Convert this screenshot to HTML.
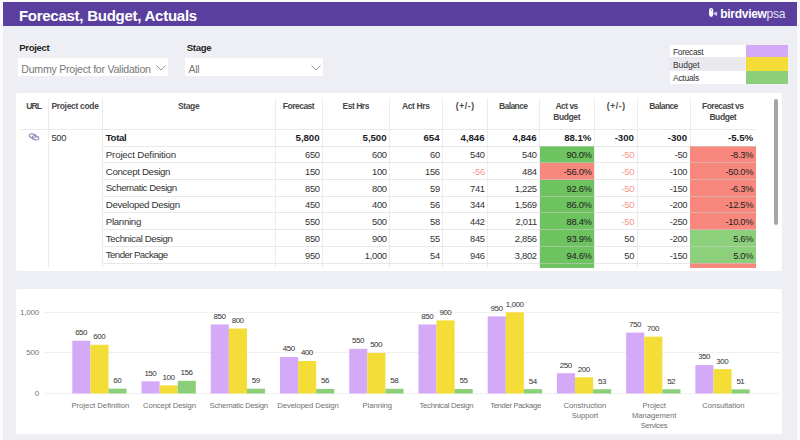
<!DOCTYPE html><html><head><meta charset="utf-8"><style>
*{margin:0;padding:0;box-sizing:border-box}
html,body{width:800px;height:440px;overflow:hidden}
body{background:#FAFAFC;font-family:"Liberation Sans",sans-serif;position:relative}
.a{position:absolute;white-space:nowrap}
.bg{position:absolute;left:3px;top:2px;width:794px;height:438px;background:#EEEFF4}
.hdr{position:absolute;left:3px;top:2px;width:794px;height:23.6px;background:#5A3F9E}
.panel{position:absolute;background:#fff}
.rp{border-radius:2px}
.t{position:absolute;white-space:nowrap;font-size:9.7px;color:#333;line-height:12px;letter-spacing:-0.1px}
.h{position:absolute;white-space:nowrap;font-size:8.5px;font-weight:bold;color:#484848;text-align:center;line-height:11px;letter-spacing:-0.3px}
.vl{position:absolute;width:1px;background:#EDEDED}
.hl{position:absolute;height:1px;background:#EAEAEA}
.bar{position:absolute}
.vlab{position:absolute;white-space:nowrap;font-size:8px;color:#333;text-align:center;width:30px;line-height:9px;letter-spacing:-0.5px}
.clab{position:absolute;white-space:nowrap;font-size:7.7px;color:#707070;text-align:center;width:90px;line-height:10px;letter-spacing:-0.2px}
</style></head><body>
<div class="bg"></div>
<div class="hdr"></div>
<div class="a" style="left:18.9px;top:6.6px;font-size:15px;font-weight:bold;color:#fff;line-height:17px;letter-spacing:-0.26px">Forecast, Budget, Actuals</div>
<div class="a" style="left:720.3px;top:6.7px;font-size:12px;color:#fff;line-height:14px;letter-spacing:-0.3px"><b>birdview</b><span style="font-weight:normal;opacity:.85">psa</span></div>
<svg class="a" style="left:709px;top:8px" width="9" height="10" viewBox="0 0 9 10"><path d="M0.1 2 Q0.1 0.1 2.1 0.1 Q4.2 0.1 4.2 2.2 L4.2 6.6 Q4.2 8.9 2.2 8.9 Q0.1 8.9 0.1 6.8 Z" fill="#fff"/><circle cx="2.3" cy="2.1" r="0.7" fill="#5A3F9E"/><path d="M3.8 5.6 L7.8 3.4 Q8.6 5.7 7.8 7.9 Z" fill="#D2C2F5"/></svg>
<div class="a" style="left:19.3px;top:41.5px;font-size:9.6px;font-weight:bold;color:#252525;line-height:12px;letter-spacing:-0.35px">Project</div>
<div class="panel" style="left:18.2px;top:58px;width:150.3px;height:18px"></div>
<div class="a" style="left:21.3px;top:62.5px;font-size:10.6px;color:#777;line-height:13px;letter-spacing:-0.25px">Dummy Project for Validation</div>
<svg class="a" style="left:156px;top:65px" width="10" height="6" viewBox="0 0 10 6"><path d="M0.5 0.5 L5 5 L9.5 0.5" stroke="#808080" stroke-width="0.85" fill="none"/></svg>
<div class="a" style="left:186.8px;top:41.5px;font-size:9.6px;font-weight:bold;color:#252525;line-height:12px;letter-spacing:-0.35px">Stage</div>
<div class="panel" style="left:185.3px;top:58px;width:138.2px;height:18px"></div>
<div class="a" style="left:188.4px;top:62.5px;font-size:10.6px;color:#777;line-height:13px;letter-spacing:-0.25px">All</div>
<svg class="a" style="left:311px;top:65px" width="10" height="6" viewBox="0 0 10 6"><path d="M0.5 0.5 L5 5 L9.5 0.5" stroke="#808080" stroke-width="0.85" fill="none"/></svg>
<div class="panel" style="left:670.2px;top:45.1px;width:76.1px;height:11.9px"></div>
<div class="a" style="left:670.2px;top:57px;width:76.1px;height:13.6px;background:#EAEAEE"></div>
<div class="panel" style="left:670.2px;top:70.6px;width:76.1px;height:13px"></div>
<div class="a" style="left:746.3px;top:45.1px;width:41.5px;height:11.9px;background:#D4AAF8"></div>
<div class="a" style="left:746.3px;top:57px;width:41.5px;height:13.6px;background:#F4DD36"></div>
<div class="a" style="left:746.3px;top:70.6px;width:41.5px;height:13px;background:#8BCF7A"></div>
<div class="a" style="left:673px;top:45.5px;font-size:8.5px;color:#333;line-height:12px;letter-spacing:-0.357px">Forecast</div>
<div class="a" style="left:673px;top:58.5px;font-size:8.5px;color:#333;line-height:12px;letter-spacing:-0.060px">Budget</div>
<div class="a" style="left:673px;top:71.5px;font-size:8.5px;color:#333;line-height:12px;letter-spacing:-0.283px">Actuals</div>
<div class="panel rp" style="left:16px;top:93.2px;width:766px;height:177.6px"></div>
<div class="vl" style="left:47.7px;top:98px;height:169.5px"></div>
<div class="vl" style="left:102.1px;top:98px;height:169.5px"></div>
<div class="vl" style="left:274.5px;top:98px;height:169.5px"></div>
<div class="vl" style="left:322.0px;top:98px;height:169.5px"></div>
<div class="vl" style="left:389.0px;top:98px;height:169.5px"></div>
<div class="vl" style="left:442.0px;top:98px;height:169.5px"></div>
<div class="vl" style="left:487.0px;top:98px;height:169.5px"></div>
<div class="vl" style="left:539.0px;top:98px;height:169.5px"></div>
<div class="vl" style="left:593.8px;top:98px;height:169.5px"></div>
<div class="vl" style="left:637.2px;top:98px;height:169.5px"></div>
<div class="vl" style="left:689.5px;top:98px;height:169.5px"></div>
<div class="hl" style="left:20px;top:128.8px;width:736px"></div>
<div class="h" style="left:19.55px;top:100.7px;width:28.200000000000003px;letter-spacing:-0.900px">URL</div>
<div class="h" style="left:51.4px;top:100.7px;text-align:left;letter-spacing:-0.318px">Project code</div>
<div class="h" style="left:102.42px;top:100.7px;width:172.4px;letter-spacing:-0.362px">Stage</div>
<div class="h" style="left:274.74px;top:100.7px;width:47.5px;letter-spacing:-0.521px">Forecast</div>
<div class="h" style="left:322.26px;top:100.7px;width:67.0px;letter-spacing:-0.483px">Est Hrs</div>
<div class="h" style="left:389.32px;top:100.7px;width:53.0px;letter-spacing:-0.367px">Act Hrs</div>
<div class="h" style="left:442.82px;top:100.7px;width:45.0px;letter-spacing:0.650px">(+/-)</div>
<div class="h" style="left:487.20px;top:100.7px;width:52.0px;letter-spacing:-0.600px">Balance</div>
<div class="h" style="left:539.24px;top:100.7px;width:54.799999999999955px;letter-spacing:-0.520px">Act vs</div>
<div class="h" style="left:539.29px;top:111.7px;width:54.799999999999955px;letter-spacing:-0.420px">Budget</div>
<div class="h" style="left:594.62px;top:100.7px;width:43.40000000000009px;letter-spacing:0.650px">(+/-)</div>
<div class="h" style="left:637.40px;top:100.7px;width:52.299999999999955px;letter-spacing:-0.600px">Balance</div>
<div class="h" style="left:689.73px;top:100.7px;width:66px;letter-spacing:-0.540px">Forecast vs</div>
<div class="h" style="left:689.79px;top:111.7px;width:66px;letter-spacing:-0.420px">Budget</div>
<div class="a" style="left:773.8px;top:98.5px;width:4px;height:126px;border-radius:2px;background:#A6A6A6"></div>
<div class="t" style="left:51.4px;top:132.39999999999998px;font-size:9.4px;letter-spacing:-0.3px">500</div>
<svg class="a" style="left:28px;top:132px" width="12" height="10" viewBox="0 0 12 10"><ellipse cx="4.6" cy="3.9" rx="3.5" ry="2.0" transform="rotate(14 4.6 3.9)" stroke="#8084B4" stroke-width="1" fill="none"/><ellipse cx="7.4" cy="5.9" rx="3.5" ry="2.0" transform="rotate(14 7.4 5.9)" stroke="#8084B4" stroke-width="1" fill="none"/></svg>
<div class="t" style="left:105.8px;top:132.2px;font-weight:bold;color:#1C1C28;letter-spacing:-0.375px">Total</div>
<div class="t" style="left:275px;top:132.39999999999998px;width:44.55px;text-align:right;font-weight:bold;color:#1C1C28;letter-spacing:-0.05px;font-size:9.7px">5,800</div>
<div class="t" style="left:322.5px;top:132.39999999999998px;width:64.05px;text-align:right;font-weight:bold;color:#1C1C28;letter-spacing:-0.05px;font-size:9.7px">5,500</div>
<div class="t" style="left:389.5px;top:132.39999999999998px;width:50.05px;text-align:right;font-weight:bold;color:#1C1C28;letter-spacing:-0.05px;font-size:9.7px">654</div>
<div class="t" style="left:442.5px;top:132.39999999999998px;width:42.05px;text-align:right;font-weight:bold;color:#1C1C28;letter-spacing:-0.05px;font-size:9.7px">4,846</div>
<div class="t" style="left:487.5px;top:132.39999999999998px;width:49.05px;text-align:right;font-weight:bold;color:#1C1C28;letter-spacing:-0.05px;font-size:9.7px">4,846</div>
<div class="t" style="left:539.5px;top:132.39999999999998px;width:51.84999999999995px;text-align:right;font-weight:bold;color:#1C1C28;letter-spacing:-0.05px;font-size:9.7px">88.1%</div>
<div class="t" style="left:594.3px;top:132.39999999999998px;width:39.55000000000009px;text-align:right;font-weight:bold;color:#1C1C28;letter-spacing:-0.05px;font-size:9.7px">-300</div>
<div class="t" style="left:637.7px;top:132.39999999999998px;width:49.34999999999995px;text-align:right;font-weight:bold;color:#1C1C28;letter-spacing:-0.05px;font-size:9.7px">-300</div>
<div class="t" style="left:690px;top:132.39999999999998px;width:63.05px;text-align:right;font-weight:bold;color:#1C1C28;letter-spacing:-0.05px;font-size:9.7px">-5.5%</div>
<div class="t" style="left:105.8px;top:149.0px;font-weight:normal;color:#333;letter-spacing:-0.165px">Project Definition</div>
<div class="t" style="left:275px;top:149.2px;width:44.8px;text-align:right;font-weight:normal;color:#333;letter-spacing:-0.3px;font-size:9.4px">650</div>
<div class="t" style="left:322.5px;top:149.2px;width:64.3px;text-align:right;font-weight:normal;color:#333;letter-spacing:-0.3px;font-size:9.4px">600</div>
<div class="t" style="left:389.5px;top:149.2px;width:50.3px;text-align:right;font-weight:normal;color:#333;letter-spacing:-0.3px;font-size:9.4px">60</div>
<div class="t" style="left:442.5px;top:149.2px;width:42.3px;text-align:right;font-weight:normal;color:#333;letter-spacing:-0.3px;font-size:9.4px">540</div>
<div class="t" style="left:487.5px;top:149.2px;width:49.3px;text-align:right;font-weight:normal;color:#333;letter-spacing:-0.3px;font-size:9.4px">540</div>
<div class="a" style="left:539.5px;top:146.1px;width:54.799999999999955px;height:16.72px;background:#6DC35F"></div>
<div class="t" style="left:539.5px;top:149.2px;width:52.09999999999995px;text-align:right;font-weight:normal;color:#222;letter-spacing:-0.3px;font-size:9.4px">90.0%</div>
<div class="t" style="left:594.3px;top:149.2px;width:39.80000000000009px;text-align:right;font-weight:normal;color:#F09A8E;letter-spacing:-0.3px;font-size:9.4px">-50</div>
<div class="t" style="left:637.7px;top:149.2px;width:49.59999999999995px;text-align:right;font-weight:normal;color:#333;letter-spacing:-0.3px;font-size:9.4px">-50</div>
<div class="a" style="left:690px;top:146.1px;width:66px;height:16.72px;background:#F8887D"></div>
<div class="t" style="left:690px;top:149.2px;width:63.3px;text-align:right;font-weight:normal;color:#222;letter-spacing:-0.3px;font-size:9.4px">-8.3%</div>
<div class="t" style="left:105.8px;top:165.72px;font-weight:normal;color:#333;letter-spacing:-0.331px">Concept Design</div>
<div class="t" style="left:275px;top:165.92px;width:44.8px;text-align:right;font-weight:normal;color:#333;letter-spacing:-0.3px;font-size:9.4px">150</div>
<div class="t" style="left:322.5px;top:165.92px;width:64.3px;text-align:right;font-weight:normal;color:#333;letter-spacing:-0.3px;font-size:9.4px">100</div>
<div class="t" style="left:389.5px;top:165.92px;width:50.3px;text-align:right;font-weight:normal;color:#333;letter-spacing:-0.3px;font-size:9.4px">156</div>
<div class="t" style="left:442.5px;top:165.92px;width:42.3px;text-align:right;font-weight:normal;color:#F09A8E;letter-spacing:-0.3px;font-size:9.4px">-56</div>
<div class="t" style="left:487.5px;top:165.92px;width:49.3px;text-align:right;font-weight:normal;color:#333;letter-spacing:-0.3px;font-size:9.4px">484</div>
<div class="a" style="left:539.5px;top:162.82px;width:54.799999999999955px;height:16.72px;background:#F8887D"></div>
<div class="t" style="left:539.5px;top:165.92px;width:52.09999999999995px;text-align:right;font-weight:normal;color:#222;letter-spacing:-0.3px;font-size:9.4px">-56.0%</div>
<div class="t" style="left:594.3px;top:165.92px;width:39.80000000000009px;text-align:right;font-weight:normal;color:#F09A8E;letter-spacing:-0.3px;font-size:9.4px">-50</div>
<div class="t" style="left:637.7px;top:165.92px;width:49.59999999999995px;text-align:right;font-weight:normal;color:#333;letter-spacing:-0.3px;font-size:9.4px">-100</div>
<div class="a" style="left:690px;top:162.82px;width:66px;height:16.72px;background:#F8887D"></div>
<div class="t" style="left:690px;top:165.92px;width:63.3px;text-align:right;font-weight:normal;color:#222;letter-spacing:-0.3px;font-size:9.4px">-50.0%</div>
<div class="t" style="left:105.8px;top:182.44px;font-weight:normal;color:#333;letter-spacing:-0.447px">Schematic Design</div>
<div class="t" style="left:275px;top:182.64px;width:44.8px;text-align:right;font-weight:normal;color:#333;letter-spacing:-0.3px;font-size:9.4px">850</div>
<div class="t" style="left:322.5px;top:182.64px;width:64.3px;text-align:right;font-weight:normal;color:#333;letter-spacing:-0.3px;font-size:9.4px">800</div>
<div class="t" style="left:389.5px;top:182.64px;width:50.3px;text-align:right;font-weight:normal;color:#333;letter-spacing:-0.3px;font-size:9.4px">59</div>
<div class="t" style="left:442.5px;top:182.64px;width:42.3px;text-align:right;font-weight:normal;color:#333;letter-spacing:-0.3px;font-size:9.4px">741</div>
<div class="t" style="left:487.5px;top:182.64px;width:49.3px;text-align:right;font-weight:normal;color:#333;letter-spacing:-0.3px;font-size:9.4px">1,225</div>
<div class="a" style="left:539.5px;top:179.54px;width:54.799999999999955px;height:16.72px;background:#6DC35F"></div>
<div class="t" style="left:539.5px;top:182.64px;width:52.09999999999995px;text-align:right;font-weight:normal;color:#222;letter-spacing:-0.3px;font-size:9.4px">92.6%</div>
<div class="t" style="left:594.3px;top:182.64px;width:39.80000000000009px;text-align:right;font-weight:normal;color:#F09A8E;letter-spacing:-0.3px;font-size:9.4px">-50</div>
<div class="t" style="left:637.7px;top:182.64px;width:49.59999999999995px;text-align:right;font-weight:normal;color:#333;letter-spacing:-0.3px;font-size:9.4px">-150</div>
<div class="a" style="left:690px;top:179.54px;width:66px;height:16.72px;background:#F8887D"></div>
<div class="t" style="left:690px;top:182.64px;width:63.3px;text-align:right;font-weight:normal;color:#222;letter-spacing:-0.3px;font-size:9.4px">-6.3%</div>
<div class="t" style="left:105.8px;top:199.16px;font-weight:normal;color:#333;letter-spacing:-0.327px">Developed Design</div>
<div class="t" style="left:275px;top:199.35999999999999px;width:44.8px;text-align:right;font-weight:normal;color:#333;letter-spacing:-0.3px;font-size:9.4px">450</div>
<div class="t" style="left:322.5px;top:199.35999999999999px;width:64.3px;text-align:right;font-weight:normal;color:#333;letter-spacing:-0.3px;font-size:9.4px">400</div>
<div class="t" style="left:389.5px;top:199.35999999999999px;width:50.3px;text-align:right;font-weight:normal;color:#333;letter-spacing:-0.3px;font-size:9.4px">56</div>
<div class="t" style="left:442.5px;top:199.35999999999999px;width:42.3px;text-align:right;font-weight:normal;color:#333;letter-spacing:-0.3px;font-size:9.4px">344</div>
<div class="t" style="left:487.5px;top:199.35999999999999px;width:49.3px;text-align:right;font-weight:normal;color:#333;letter-spacing:-0.3px;font-size:9.4px">1,569</div>
<div class="a" style="left:539.5px;top:196.26px;width:54.799999999999955px;height:16.72px;background:#6DC35F"></div>
<div class="t" style="left:539.5px;top:199.35999999999999px;width:52.09999999999995px;text-align:right;font-weight:normal;color:#222;letter-spacing:-0.3px;font-size:9.4px">86.0%</div>
<div class="t" style="left:594.3px;top:199.35999999999999px;width:39.80000000000009px;text-align:right;font-weight:normal;color:#F09A8E;letter-spacing:-0.3px;font-size:9.4px">-50</div>
<div class="t" style="left:637.7px;top:199.35999999999999px;width:49.59999999999995px;text-align:right;font-weight:normal;color:#333;letter-spacing:-0.3px;font-size:9.4px">-200</div>
<div class="a" style="left:690px;top:196.26px;width:66px;height:16.72px;background:#F8887D"></div>
<div class="t" style="left:690px;top:199.35999999999999px;width:63.3px;text-align:right;font-weight:normal;color:#222;letter-spacing:-0.3px;font-size:9.4px">-12.5%</div>
<div class="t" style="left:105.8px;top:215.88px;font-weight:normal;color:#333;letter-spacing:-0.314px">Planning</div>
<div class="t" style="left:275px;top:216.07999999999998px;width:44.8px;text-align:right;font-weight:normal;color:#333;letter-spacing:-0.3px;font-size:9.4px">550</div>
<div class="t" style="left:322.5px;top:216.07999999999998px;width:64.3px;text-align:right;font-weight:normal;color:#333;letter-spacing:-0.3px;font-size:9.4px">500</div>
<div class="t" style="left:389.5px;top:216.07999999999998px;width:50.3px;text-align:right;font-weight:normal;color:#333;letter-spacing:-0.3px;font-size:9.4px">58</div>
<div class="t" style="left:442.5px;top:216.07999999999998px;width:42.3px;text-align:right;font-weight:normal;color:#333;letter-spacing:-0.3px;font-size:9.4px">442</div>
<div class="t" style="left:487.5px;top:216.07999999999998px;width:49.3px;text-align:right;font-weight:normal;color:#333;letter-spacing:-0.3px;font-size:9.4px">2,011</div>
<div class="a" style="left:539.5px;top:212.98px;width:54.799999999999955px;height:16.72px;background:#6DC35F"></div>
<div class="t" style="left:539.5px;top:216.07999999999998px;width:52.09999999999995px;text-align:right;font-weight:normal;color:#222;letter-spacing:-0.3px;font-size:9.4px">88.4%</div>
<div class="t" style="left:594.3px;top:216.07999999999998px;width:39.80000000000009px;text-align:right;font-weight:normal;color:#F09A8E;letter-spacing:-0.3px;font-size:9.4px">-50</div>
<div class="t" style="left:637.7px;top:216.07999999999998px;width:49.59999999999995px;text-align:right;font-weight:normal;color:#333;letter-spacing:-0.3px;font-size:9.4px">-250</div>
<div class="a" style="left:690px;top:212.98px;width:66px;height:16.72px;background:#F8887D"></div>
<div class="t" style="left:690px;top:216.07999999999998px;width:63.3px;text-align:right;font-weight:normal;color:#222;letter-spacing:-0.3px;font-size:9.4px">-10.0%</div>
<div class="t" style="left:105.8px;top:232.6px;font-weight:normal;color:#333;letter-spacing:-0.413px">Technical Design</div>
<div class="t" style="left:275px;top:232.79999999999998px;width:44.8px;text-align:right;font-weight:normal;color:#333;letter-spacing:-0.3px;font-size:9.4px">850</div>
<div class="t" style="left:322.5px;top:232.79999999999998px;width:64.3px;text-align:right;font-weight:normal;color:#333;letter-spacing:-0.3px;font-size:9.4px">900</div>
<div class="t" style="left:389.5px;top:232.79999999999998px;width:50.3px;text-align:right;font-weight:normal;color:#333;letter-spacing:-0.3px;font-size:9.4px">55</div>
<div class="t" style="left:442.5px;top:232.79999999999998px;width:42.3px;text-align:right;font-weight:normal;color:#333;letter-spacing:-0.3px;font-size:9.4px">845</div>
<div class="t" style="left:487.5px;top:232.79999999999998px;width:49.3px;text-align:right;font-weight:normal;color:#333;letter-spacing:-0.3px;font-size:9.4px">2,856</div>
<div class="a" style="left:539.5px;top:229.7px;width:54.799999999999955px;height:16.72px;background:#6DC35F"></div>
<div class="t" style="left:539.5px;top:232.79999999999998px;width:52.09999999999995px;text-align:right;font-weight:normal;color:#222;letter-spacing:-0.3px;font-size:9.4px">93.9%</div>
<div class="t" style="left:594.3px;top:232.79999999999998px;width:39.80000000000009px;text-align:right;font-weight:normal;color:#333;letter-spacing:-0.3px;font-size:9.4px">50</div>
<div class="t" style="left:637.7px;top:232.79999999999998px;width:49.59999999999995px;text-align:right;font-weight:normal;color:#333;letter-spacing:-0.3px;font-size:9.4px">-200</div>
<div class="a" style="left:690px;top:229.7px;width:66px;height:16.72px;background:#8CD07C"></div>
<div class="t" style="left:690px;top:232.79999999999998px;width:63.3px;text-align:right;font-weight:normal;color:#222;letter-spacing:-0.3px;font-size:9.4px">5.6%</div>
<div class="t" style="left:105.8px;top:249.32px;font-weight:normal;color:#333;letter-spacing:-0.592px">Tender Package</div>
<div class="t" style="left:275px;top:249.51999999999998px;width:44.8px;text-align:right;font-weight:normal;color:#333;letter-spacing:-0.3px;font-size:9.4px">950</div>
<div class="t" style="left:322.5px;top:249.51999999999998px;width:64.3px;text-align:right;font-weight:normal;color:#333;letter-spacing:-0.3px;font-size:9.4px">1,000</div>
<div class="t" style="left:389.5px;top:249.51999999999998px;width:50.3px;text-align:right;font-weight:normal;color:#333;letter-spacing:-0.3px;font-size:9.4px">54</div>
<div class="t" style="left:442.5px;top:249.51999999999998px;width:42.3px;text-align:right;font-weight:normal;color:#333;letter-spacing:-0.3px;font-size:9.4px">946</div>
<div class="t" style="left:487.5px;top:249.51999999999998px;width:49.3px;text-align:right;font-weight:normal;color:#333;letter-spacing:-0.3px;font-size:9.4px">3,802</div>
<div class="a" style="left:539.5px;top:246.42px;width:54.799999999999955px;height:16.72px;background:#6DC35F"></div>
<div class="t" style="left:539.5px;top:249.51999999999998px;width:52.09999999999995px;text-align:right;font-weight:normal;color:#222;letter-spacing:-0.3px;font-size:9.4px">94.6%</div>
<div class="t" style="left:594.3px;top:249.51999999999998px;width:39.80000000000009px;text-align:right;font-weight:normal;color:#333;letter-spacing:-0.3px;font-size:9.4px">50</div>
<div class="t" style="left:637.7px;top:249.51999999999998px;width:49.59999999999995px;text-align:right;font-weight:normal;color:#333;letter-spacing:-0.3px;font-size:9.4px">-150</div>
<div class="a" style="left:690px;top:246.42px;width:66px;height:16.72px;background:#8CD07C"></div>
<div class="t" style="left:690px;top:249.51999999999998px;width:63.3px;text-align:right;font-weight:normal;color:#222;letter-spacing:-0.3px;font-size:9.4px">5.0%</div>
<div class="a" style="left:539.5px;top:263.14px;width:54.799999999999955px;height:4.5px;background:#6DC35F"></div>
<div class="a" style="left:690px;top:263.14px;width:66px;height:4.5px;background:#F8887D"></div>
<div class="hl" style="left:102.6px;top:145.6px;width:653.4px;background:rgba(210,210,210,0.5)"></div>
<div class="hl" style="left:102.6px;top:162.32px;width:653.4px;background:rgba(210,210,210,0.5)"></div>
<div class="hl" style="left:102.6px;top:179.04px;width:653.4px;background:rgba(210,210,210,0.5)"></div>
<div class="hl" style="left:102.6px;top:195.76px;width:653.4px;background:rgba(210,210,210,0.5)"></div>
<div class="hl" style="left:102.6px;top:212.48px;width:653.4px;background:rgba(210,210,210,0.5)"></div>
<div class="hl" style="left:102.6px;top:229.2px;width:653.4px;background:rgba(210,210,210,0.5)"></div>
<div class="hl" style="left:102.6px;top:245.92px;width:653.4px;background:rgba(210,210,210,0.5)"></div>
<div class="hl" style="left:102.6px;top:262.64px;width:653.4px;background:rgba(210,210,210,0.5)"></div>
<div class="panel rp" style="left:16px;top:289.2px;width:766.3px;height:144.9px"></div>
<div class="hl" style="left:43.7px;top:311.8px;width:736.3px;background:#F0F0F0"></div>
<div class="a" style="left:0px;top:307.5px;width:39px;text-align:right;font-size:8px;color:#777;line-height:10px;letter-spacing:-0.2px">1,000</div>
<div class="hl" style="left:43.7px;top:352.4px;width:736.3px;background:#F0F0F0"></div>
<div class="a" style="left:0px;top:348.09999999999997px;width:39px;text-align:right;font-size:8px;color:#777;line-height:10px;letter-spacing:-0.2px">500</div>
<div class="hl" style="left:43.7px;top:393.0px;width:736.3px;background:#F0F0F0"></div>
<div class="a" style="left:0px;top:388.7px;width:39px;text-align:right;font-size:8px;color:#777;line-height:10px;letter-spacing:-0.2px">0</div>
<svg class="a" style="left:0;top:0" width="800" height="440" viewBox="0 0 800 440"><rect x="72.30" y="340.72" width="18.1" height="52.78" fill="#D4AAF8"/><rect x="90.40" y="344.78" width="18.1" height="48.72" fill="#F4DD36"/><rect x="108.50" y="388.63" width="18.1" height="4.87" fill="#8BCF7A"/><rect x="141.53" y="381.32" width="18.1" height="12.18" fill="#D4AAF8"/><rect x="159.63" y="385.38" width="18.1" height="8.12" fill="#F4DD36"/><rect x="177.73" y="380.83" width="18.1" height="12.67" fill="#8BCF7A"/><rect x="210.76" y="324.48" width="18.1" height="69.02" fill="#D4AAF8"/><rect x="228.86" y="328.54" width="18.1" height="64.96" fill="#F4DD36"/><rect x="246.96" y="388.71" width="18.1" height="4.79" fill="#8BCF7A"/><rect x="279.99" y="356.96" width="18.1" height="36.54" fill="#D4AAF8"/><rect x="298.09" y="361.02" width="18.1" height="32.48" fill="#F4DD36"/><rect x="316.19" y="388.95" width="18.1" height="4.55" fill="#8BCF7A"/><rect x="349.22" y="348.84" width="18.1" height="44.66" fill="#D4AAF8"/><rect x="367.32" y="352.90" width="18.1" height="40.60" fill="#F4DD36"/><rect x="385.42" y="388.79" width="18.1" height="4.71" fill="#8BCF7A"/><rect x="418.45" y="324.48" width="18.1" height="69.02" fill="#D4AAF8"/><rect x="436.55" y="320.42" width="18.1" height="73.08" fill="#F4DD36"/><rect x="454.65" y="389.03" width="18.1" height="4.47" fill="#8BCF7A"/><rect x="487.68" y="316.36" width="18.1" height="77.14" fill="#D4AAF8"/><rect x="505.78" y="312.30" width="18.1" height="81.20" fill="#F4DD36"/><rect x="523.88" y="389.12" width="18.1" height="4.38" fill="#8BCF7A"/><rect x="556.91" y="373.20" width="18.1" height="20.30" fill="#D4AAF8"/><rect x="575.01" y="377.26" width="18.1" height="16.24" fill="#F4DD36"/><rect x="593.11" y="389.20" width="18.1" height="4.30" fill="#8BCF7A"/><rect x="626.14" y="332.60" width="18.1" height="60.90" fill="#D4AAF8"/><rect x="644.24" y="336.66" width="18.1" height="56.84" fill="#F4DD36"/><rect x="662.34" y="389.28" width="18.1" height="4.22" fill="#8BCF7A"/><rect x="695.37" y="365.08" width="18.1" height="28.42" fill="#D4AAF8"/><rect x="713.47" y="369.14" width="18.1" height="24.36" fill="#F4DD36"/><rect x="731.57" y="389.36" width="18.1" height="4.14" fill="#8BCF7A"/></svg>
<div class="vlab" style="left:66.10px;top:328.12px">650</div>
<div class="vlab" style="left:84.20px;top:332.18px">600</div>
<div class="vlab" style="left:102.30px;top:376.03px">60</div>
<div class="clab" style="left:55.34px;top:401px;letter-spacing:-0.018px">Project Definition</div>
<div class="vlab" style="left:135.33px;top:368.72px">150</div>
<div class="vlab" style="left:153.43px;top:372.78px">100</div>
<div class="vlab" style="left:171.53px;top:368.23px">156</div>
<div class="clab" style="left:124.51px;top:401px;letter-spacing:-0.138px">Concept Design</div>
<div class="vlab" style="left:204.56px;top:311.88px">850</div>
<div class="vlab" style="left:222.66px;top:315.94px">800</div>
<div class="vlab" style="left:240.76px;top:376.11px">59</div>
<div class="clab" style="left:193.69px;top:401px;letter-spacing:-0.233px">Schematic Design</div>
<div class="vlab" style="left:273.79px;top:344.36px">450</div>
<div class="vlab" style="left:291.89px;top:348.42px">400</div>
<div class="vlab" style="left:309.99px;top:376.35px">56</div>
<div class="clab" style="left:263.00px;top:401px;letter-spacing:-0.080px">Developed Design</div>
<div class="vlab" style="left:343.02px;top:336.24px">550</div>
<div class="vlab" style="left:361.12px;top:340.30px">500</div>
<div class="vlab" style="left:379.22px;top:376.19px">58</div>
<div class="clab" style="left:332.26px;top:401px;letter-spacing:-0.029px">Planning</div>
<div class="vlab" style="left:412.25px;top:311.88px">850</div>
<div class="vlab" style="left:430.35px;top:307.82px">900</div>
<div class="vlab" style="left:448.45px;top:376.43px">55</div>
<div class="clab" style="left:401.36px;top:401px;letter-spacing:-0.273px">Technical Design</div>
<div class="vlab" style="left:481.48px;top:303.76px">950</div>
<div class="vlab" style="left:499.58px;top:299.70px">1,000</div>
<div class="vlab" style="left:517.68px;top:376.52px">54</div>
<div class="clab" style="left:470.56px;top:401px;letter-spacing:-0.350px">Tender Package</div>
<div class="vlab" style="left:550.71px;top:360.60px">250</div>
<div class="vlab" style="left:568.81px;top:364.66px">200</div>
<div class="vlab" style="left:586.91px;top:376.60px">53</div>
<div class="clab" style="left:539.95px;top:401px;letter-spacing:-0.027px">Construction</div>
<div class="clab" style="left:539.93px;top:411px;letter-spacing:-0.050px">Support</div>
<div class="vlab" style="left:619.94px;top:320.00px">750</div>
<div class="vlab" style="left:638.04px;top:324.06px">700</div>
<div class="vlab" style="left:656.14px;top:376.68px">52</div>
<div class="clab" style="left:609.14px;top:401px;letter-spacing:-0.100px">Project</div>
<div class="clab" style="left:609.16px;top:411px;letter-spacing:-0.061px">Management</div>
<div class="clab" style="left:608.99px;top:421px;letter-spacing:-0.393px">Services</div>
<div class="vlab" style="left:689.17px;top:352.48px">350</div>
<div class="vlab" style="left:707.27px;top:356.54px">300</div>
<div class="vlab" style="left:725.37px;top:376.76px">51</div>
<div class="clab" style="left:678.41px;top:401px;letter-spacing:-0.027px">Consultation</div>
</body></html>
